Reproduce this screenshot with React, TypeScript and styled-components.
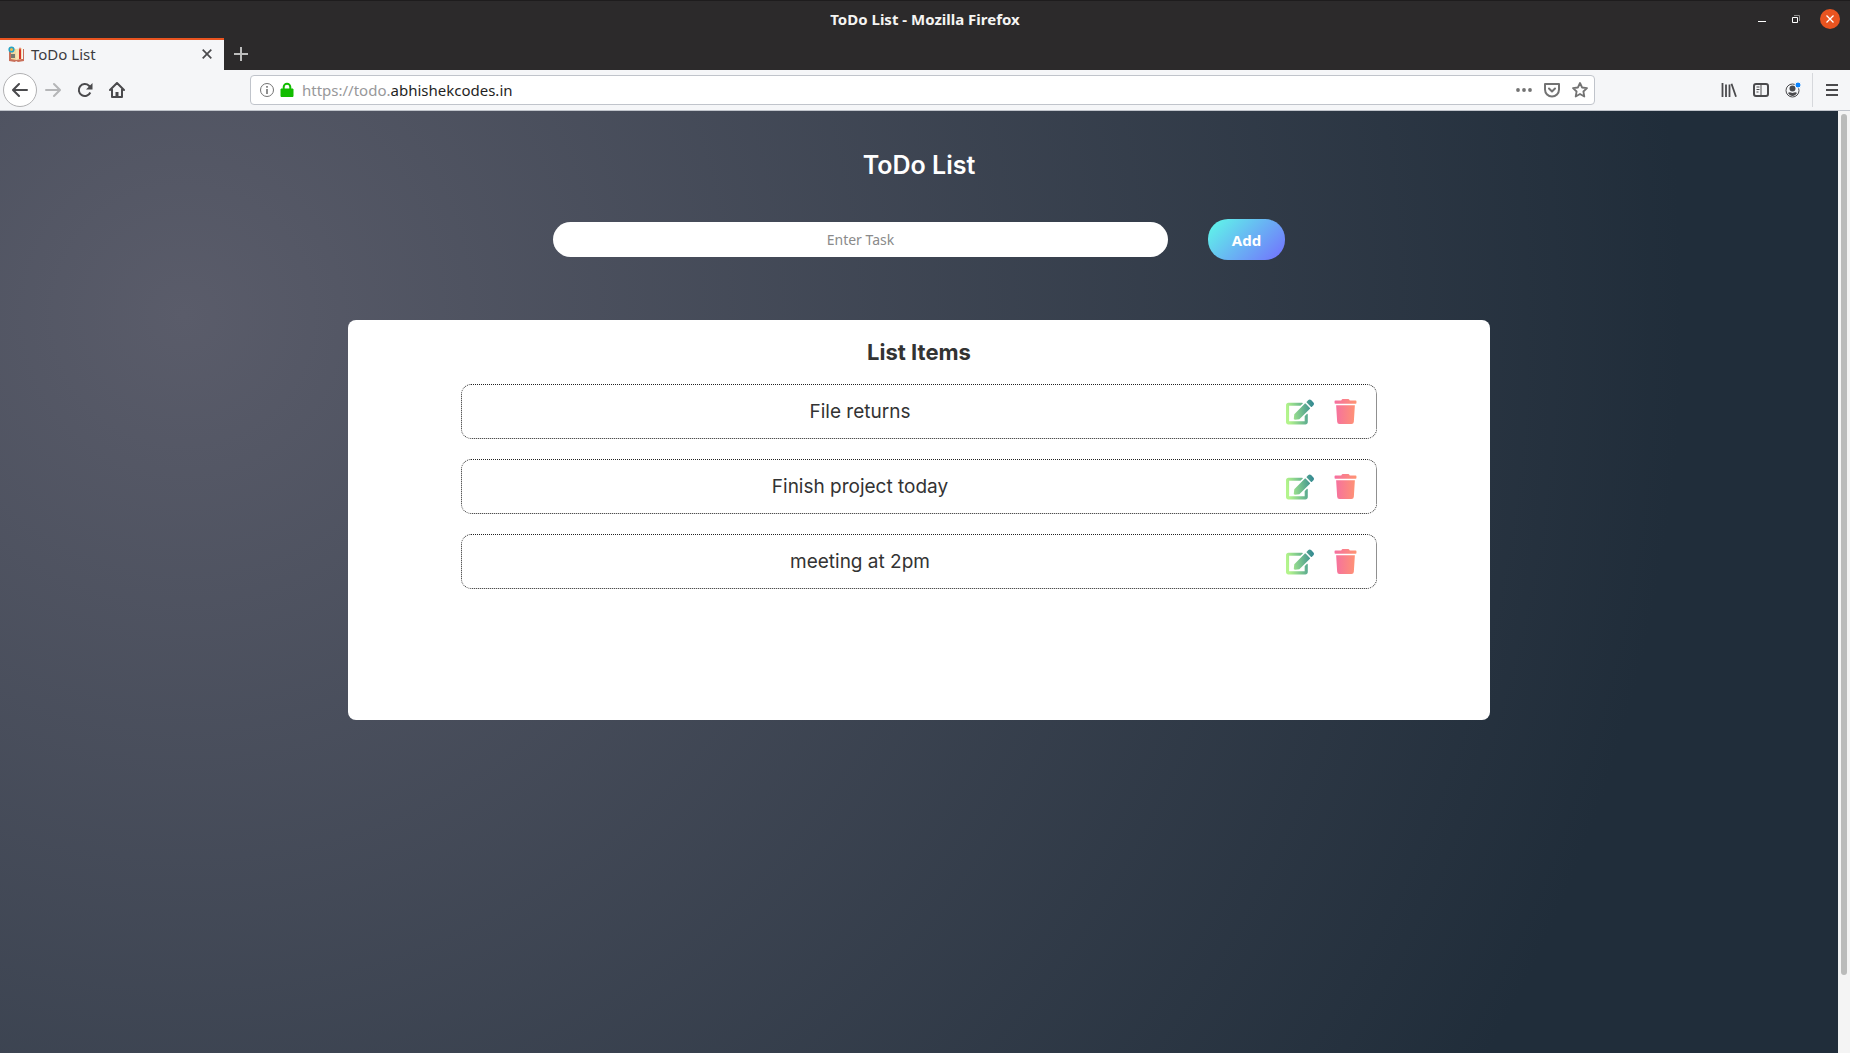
import React, { useState } from "react";
import styled, { createGlobalStyle, css } from "styled-components";
import { FaEdit, FaTrash } from "react-icons/fa";

const uiFont = '"Noto Sans", "Open Sans", sans-serif';
const pageFont = 'Inter, "Open Sans", sans-serif';

const GlobalStyle = createGlobalStyle`
  *, *::before, *::after { box-sizing: border-box; }
  body { margin: 0; font-family: ${uiFont}; }
  h1, h2, p, ul { margin: 0; padding: 0; }
  button, input { font: inherit; }
`;

const Browser = styled.div`
  display: flex;
  flex-direction: column;
  height: 100vh;
  overflow: hidden;
`;

const Frame = styled.header`
  background: #2c2a2b;
  border-top: 1px solid #1e1c1d;
`;

const TitleBar = styled.div`
  display: grid;
  grid-template-columns: 1fr auto 1fr;
  align-items: center;
  height: 37px;
  padding: 0 10px 2px;
`;

const WindowTitle = styled.p`
  grid-column: 2;
  color: #f5f4f2;
  font-size: 15px;
  font-weight: 700;
`;

const WindowButtons = styled.div`
  justify-self: end;
  display: flex;
  align-items: center;
  gap: 14px;
`;

const iconButton = css`
  display: flex;
  align-items: center;
  justify-content: center;
  flex: none;
  padding: 0;
  border: 0;
  background: none;
  cursor: pointer;
`;

const WindowButton = styled.button<{ $close?: boolean }>`
  ${iconButton}
  width: 20px;
  height: 20px;
  border-radius: 50%;
  background: ${(p) => (p.$close ? "#e95420" : "transparent")};
`;

const TabStrip = styled.div`
  display: flex;
  align-items: stretch;
  height: 32px;
`;

const Tab = styled.div`
  display: flex;
  align-items: center;
  gap: 6px;
  width: 224px;
  padding: 0 8px 2px;
  border-top: 2px solid #e95420;
  background: #f5f6f8;
  color: #3c3c3f;
  font-size: 15px;
`;

const TabName = styled.span`
  flex: 1;
`;

const PlainButton = styled.button`
  ${iconButton}
  width: 18px;
  height: 18px;
`;

const NewTab = styled.button`
  ${iconButton}
  width: 34px;
`;

const Toolbar = styled.nav`
  display: flex;
  align-items: center;
  flex: none;
  height: 41px;
  padding: 0 2px 0 3px;
  background: #f5f6f8;
  border-bottom: 1px solid #c0c4cb;
`;

const Tools = styled.div`
  display: flex;
  align-items: center;
`;

const Tool = styled.button<{ $round?: boolean }>`
  ${iconButton}
  width: ${(p) => (p.$round ? "34px" : "32px")};
  height: 34px;
  ${(p) => p.$round && "border: 1px solid #b1b1b3; border-radius: 50%; background: #fff;"}
`;

const UrlBar = styled.div`
  display: flex;
  align-items: center;
  flex: 1;
  height: 30px;
  margin: 0 118px 0 117px;
  padding: 0 5px 0 8px;
  border: 1px solid #c0c4cb;
  border-radius: 4px;
  background: #fff;
`;

const Identity = styled.div`
  display: flex;
  align-items: center;
  gap: 5px;
  margin-right: 8px;
`;

const Address = styled.a`
  flex: 1;
  color: #98989a;
  font-size: 15px;
  line-height: 20px;
  text-decoration: none;
`;

const Host = styled.span`
  color: #1f1f24;
`;

const UrlActions = styled.div`
  display: flex;
  gap: 10px;
`;

const MenuCell = styled.div`
  display: flex;
  margin-left: 3px;
  padding-left: 3px;
  border-left: 1px solid #d6d8dc;
`;

const Viewport = styled.div`
  display: flex;
  flex: 1;
  min-height: 0;
`;

const Page = styled.main`
  display: flex;
  flex-direction: column;
  align-items: center;
  flex: 1;
  overflow: hidden;
  padding: 0 24px;
  background: radial-gradient(circle 1844px at 10% 204px, rgb(90, 92, 106) 0%, rgb(32, 45, 58) 81.3%);
  font-family: ${pageFont};
`;

const Scrollbar = styled.div`
  width: 12px;
  padding: 3px;
  background: #f4f4f4;
`;

const Thumb = styled.div`
  height: 92%;
  border-radius: 3px;
  background: #babbba;
`;

const Heading = styled.h1`
  margin-top: 39px;
  color: #fff;
  font-size: 25px;
  font-weight: 600;
  line-height: 30px;
`;

const TaskForm = styled.form`
  display: flex;
  align-items: center;
  gap: 40px;
  width: 100%;
  max-width: 732px;
  margin: 39px 0 60px;
  font-family: ${uiFont};
  font-size: 14px;
`;

const TaskInput = styled.input`
  flex: 1;
  min-width: 0;
  height: 35px;
  padding: 0 16px;
  border: 0;
  border-radius: 18px;
  background: #fff;
  text-align: center;
  &::placeholder { color: #8a8a8a; opacity: 1; }
`;

const AddButton = styled.button`
  width: 77px;
  height: 41px;
  padding: 0;
  border: 0;
  border-radius: 20px;
  background: linear-gradient(135deg, #5efce8 0%, #736efe 100%);
  color: #fff;
  font-size: 15px;
  font-weight: 700;
  cursor: pointer;
`;

const Card = styled.section`
  width: 100%;
  max-width: 1142px;
  min-height: 400px;
  padding: 16px 113px;
  border-radius: 8px;
  background: #fff;
  color: #333;
  text-align: center;
`;

const CardTitle = styled.h2`
  margin-bottom: 16px;
  font-size: 22px;
  font-weight: 700;
  line-height: 32px;
`;

const TaskList = styled.ul`
  display: flex;
  flex-direction: column;
  gap: 20px;
  list-style: none;
`;

const TaskRow = styled.li`
  display: flex;
  align-items: center;
  height: 55px;
  padding-right: 18px;
  border: 1px dotted #222;
  border-radius: 10px;
`;

const TaskText = styled.span`
  flex: 1;
  font-size: 19px;
`;

const TaskActions = styled.div`
  display: flex;
  align-items: center;
  gap: 19px;
  margin-left: 28px;
`;

const TaskButton = styled.button<{ $fill: string; $size: number }>`
  ${iconButton}
  font-size: ${(p) => p.$size}px;
  path { fill: url(#${(p) => p.$fill}); }
`;

const Gradients = styled.svg`
  position: absolute;
`;

const ink = "#4a4a4d";

const Favicon = () => (
  <svg width="17" height="17" viewBox="0 0 17 17" aria-hidden="true">
    <path d="M1 4h2v9h12V3h1v12l-6 1-2-1-1 1-6-1z" fill="#c9705a" />
    <path d="M3 2l5 1v11l-5-1z" fill="#f0d9a0" />
    <path d="M8 3l6-1v11l-6 1z" fill="#f6e3b4" />
    <path d="M3 8h4v4H3z" fill="#77796f" />
    <path d="M11 4l1-3 1 3v9h-2z" fill="#d8342a" />
    <circle cx="3.5" cy="3.5" r="2.3" fill="#f0b84a" stroke="#26a3c4" strokeWidth="1.6" />
  </svg>
);

const initialTasks = ["File returns", "Finish project today", "meeting at 2pm"];

export default function App() {
  const [tasks, setTasks] = useState(initialTasks);
  const [draft, setDraft] = useState("");

  const addTask = (event: React.FormEvent) => {
    event.preventDefault();
    if (!draft.trim()) return;
    setTasks([...tasks, draft.trim()]);
    setDraft("");
  };

  const editTask = (index: number) => {
    setDraft(tasks[index]);
    setTasks(tasks.filter((_, i) => i !== index));
  };

  return (
    <Browser>
      <GlobalStyle />
      <Gradients width="0" height="0" aria-hidden="true">
        <linearGradient id="edit-fill" x1="0" y1="0.15" x2="1" y2="0">
          <stop offset="0" stopColor="#b3f48c" />
          <stop offset="1" stopColor="#2d8492" />
        </linearGradient>
        <linearGradient id="trash-fill">
          <stop offset="0" stopColor="#f56fa1" />
          <stop offset="1" stopColor="#ff9472" />
        </linearGradient>
      </Gradients>

      <Frame>
        <TitleBar>
          <WindowTitle>ToDo List - Mozilla Firefox</WindowTitle>
          <WindowButtons>
            <WindowButton aria-label="Minimize">
              <svg width="8" height="8" viewBox="0 0 8 8"><path d="M0 6.5h8" stroke="#fff" /></svg>
            </WindowButton>
            <WindowButton aria-label="Restore">
              <svg width="8" height="8" viewBox="0 0 8 8" fill="none">
                <path d="M.5 2.5h5v5h-5z" stroke="#fff" />
                <path d="M2 .5h5.500V6" stroke="#8f8e8e" />
              </svg>
            </WindowButton>
            <WindowButton $close aria-label="Close">
              <svg width="8" height="8" viewBox="0 0 8 8"><path d="M.5.5l7 7M7.500.5l-7 7" stroke="#fff" strokeWidth="1.300" /></svg>
            </WindowButton>
          </WindowButtons>
        </TitleBar>
        <TabStrip>
          <Tab>
            <Favicon />
            <TabName>ToDo List</TabName>
            <PlainButton aria-label="Close tab">
              <svg width="10" height="10" viewBox="0 0 10 10"><path d="M.7.7l8.600 8.600M9.300.7L.7 9.300" stroke={ink} strokeWidth="1.700" /></svg>
            </PlainButton>
          </Tab>
          <NewTab aria-label="New tab">
            <svg width="14" height="14" viewBox="0 0 14 14"><path d="M7 0v14M0 7h14" stroke="#bdbdbd" strokeWidth="2" /></svg>
          </NewTab>
        </TabStrip>
      </Frame>

      <Toolbar>
        <Tools>
          <Tool $round aria-label="Back">
            <svg width="16" height="16" viewBox="0 0 16 16" fill="none" stroke={ink} strokeWidth="2" strokeLinecap="round" strokeLinejoin="round"><path d="M15 8H1.500M7 2L1 8l6 6" /></svg>
          </Tool>
          <Tool aria-label="Forward">
            <svg width="16" height="16" viewBox="0 0 16 16" fill="none" stroke="#b5b6b8" strokeWidth="2" strokeLinecap="round" strokeLinejoin="round"><path d="M1 8h13.500M9 2l6 6-6 6" /></svg>
          </Tool>
          <Tool aria-label="Reload">
            <svg width="16" height="16" viewBox="0 0 16 16" fill="none"><path d="M13.300 10.500A6 6 0 1 1 12 3.700l1.500 1.500" stroke={ink} strokeWidth="2" /><path d="M15.500 1v6.500H9z" fill={ink} /></svg>
          </Tool>
          <Tool aria-label="Home">
            <svg width="16" height="16" viewBox="0 0 16 16" fill="none" stroke={ink} strokeWidth="2" strokeLinejoin="round" strokeLinecap="round"><path d="M1 8l7-7 7 7M3 7.500V15h10V7.500" /><path d="M8 10v4.500" strokeWidth="3" strokeLinecap="butt" /></svg>
          </Tool>
        </Tools>
        <UrlBar>
          <Identity>
            <svg width="16" height="16" viewBox="0 0 16 16" fill="none"><circle cx="8" cy="8" r="6.500" stroke="#737373" /><path d="M8 7v5M8 4v1.700" stroke="#737373" strokeWidth="1.600" /></svg>
            <svg width="14" height="16" viewBox="0 0 14 16" fill="none"><path d="M1 7h12v7.500H1z" fill="#12bc00" stroke="#12bc00" strokeLinejoin="round" /><path d="M3.700 7.500V5a3.300 3.300 0 0 1 6.600 0v2.500" stroke="#12bc00" strokeWidth="2" /></svg>
          </Identity>
          <Address href="#">https://todo.<Host>abhishekcodes.in</Host></Address>
          <UrlActions>
            <PlainButton aria-label="Page actions">
              <svg width="16" height="16" viewBox="0 0 16 16" fill="#737373"><circle cx="2" cy="8" r="1.900" /><circle cx="8" cy="8" r="1.900" /><circle cx="14" cy="8" r="1.900" /></svg>
            </PlainButton>
            <PlainButton aria-label="Save to Pocket">
              <svg width="16" height="16" viewBox="0 0 16 16" fill="none" stroke="#737373" strokeWidth="2" strokeLinejoin="round" strokeLinecap="round"><path d="M1 2h14v5.500a7 7 0 0 1-14 0z" /><path d="M5 6.500l3 3 3-3" /></svg>
            </PlainButton>
            <PlainButton aria-label="Bookmark">
              <svg width="16" height="16" viewBox="0 0 16 16" fill="none" stroke="#737373" strokeWidth="1.800" strokeLinejoin="round"><path d="M8 1l2.100 4.500 4.900.6-3.600 3.400.9 5L8 12l-4.300 2.500.9-5L1 6.100l4.900-.6z" /></svg>
            </PlainButton>
          </UrlActions>
        </UrlBar>
        <Tools>
          <Tool aria-label="Library">
            <svg width="16" height="16" viewBox="0 0 16 16" fill="none" stroke={ink} strokeWidth="1.800"><path d="M1.500 1v14M5 2.500V15M8.500 2.500V15M10.500 1.800L15 14.700" /></svg>
          </Tool>
          <Tool aria-label="Sidebar">
            <svg width="16" height="16" viewBox="0 0 16 16" fill="none" stroke={ink}><rect x="1" y="2" width="14" height="12" rx="2" strokeWidth="2" /><path d="M8 2v12M3.500 5h3M3.500 7.500h3M3.500 10h2" /></svg>
          </Tool>
          <Tool aria-label="Account">
            <svg width="16" height="16" viewBox="0 0 16 16" fill="none"><circle cx="7.500" cy="8.500" r="6.500" stroke={ink} /><circle cx="7.500" cy="6.500" r="3" fill={ink} /><path d="M3 11c1-1 2-1 4.500 0C10 10 11 10 12 11c-1 2-3 3-4.500 3S4 13 3 11z" fill={ink} /><circle cx="13" cy="3" r="3" fill="#0a84ff" stroke="#f5f6f8" strokeWidth="1" /></svg>
          </Tool>
          <MenuCell>
            <Tool aria-label="Menu">
              <svg width="12" height="12" viewBox="0 0 12 12"><path d="M0 1h12M0 6h12M0 11h12" stroke={ink} strokeWidth="2" /></svg>
            </Tool>
          </MenuCell>
        </Tools>
      </Toolbar>

      <Viewport>
        <Page>
          <Heading>ToDo List</Heading>
          <TaskForm onSubmit={addTask}>
            <TaskInput
              aria-label="Enter Task"
              placeholder="Enter Task"
              value={draft}
              onChange={(event) => setDraft(event.target.value)}
            />
            <AddButton type="submit">Add</AddButton>
          </TaskForm>
          <Card>
            <CardTitle>List Items</CardTitle>
            <TaskList>
              {tasks.map((task, index) => (
                <TaskRow key={task + index}>
                  <TaskText>{task}</TaskText>
                  <TaskActions>
                    <TaskButton $fill="edit-fill" $size={28} aria-label={`Edit ${task}`} onClick={() => editTask(index)}>
                      <FaEdit />
                    </TaskButton>
                    <TaskButton
                      $fill="trash-fill"
                      $size={25}
                      aria-label={`Delete ${task}`}
                      onClick={() => setTasks(tasks.filter((_, i) => i !== index))}
                    >
                      <FaTrash />
                    </TaskButton>
                  </TaskActions>
                </TaskRow>
              ))}
            </TaskList>
          </Card>
        </Page>
        <Scrollbar>
          <Thumb />
        </Scrollbar>
      </Viewport>
    </Browser>
  );
}
